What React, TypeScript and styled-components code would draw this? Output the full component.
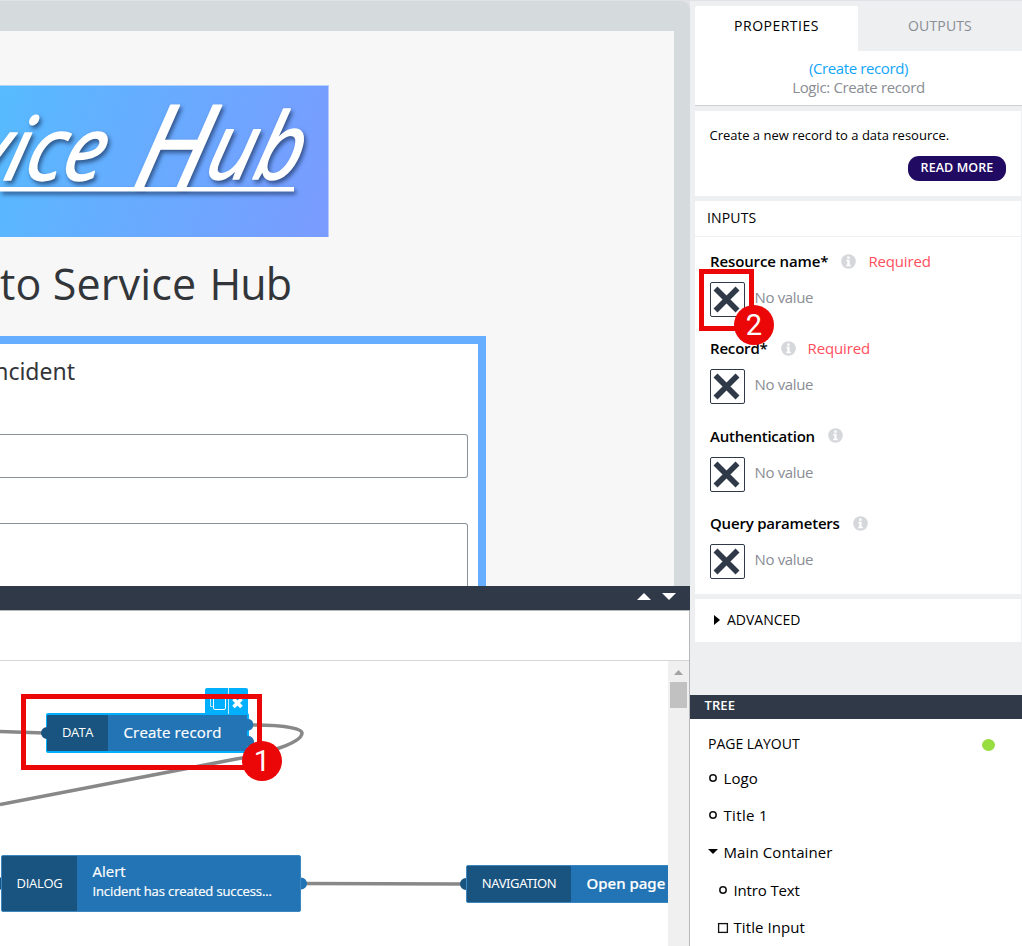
import React from "react";
import styled, { createGlobalStyle } from "styled-components";

const Global = createGlobalStyle`
  * { box-sizing: border-box; }
  body { margin: 0; background: #edeff1; font-family: "Open Sans", "Noto Sans", sans-serif; }
`;

const Screen = styled.div`
  display: grid;
  grid-template-columns: 690px 332px;
  width: 1022px;
  height: 946px;
  overflow: hidden;
  position: relative;
`;

const Txt = styled.span<{ $size: number; $ls?: number; $color?: string; $weight?: number; $font?: string; $lh?: number }>`
  display: block;
  white-space: pre;
  font-size: ${(p) => p.$size}px;
  letter-spacing: ${(p) => p.$ls ?? 0}px;
  color: ${(p) => p.$color ?? "#000"};
  font-weight: ${(p) => p.$weight ?? 400};
  line-height: ${(p) => p.$lh ?? 20}px;
  ${(p) => (p.$font ? `font-family: "${p.$font}", sans-serif;` : "")}
`;

const Workspace = styled.main`
  display: flex;
  flex-direction: column;
  min-width: 0;
  height: 946px;
`;

const Preview = styled.section`
  height: 586px;
  border-top: 1px solid #e1e2e7;
  background: #e1e2e7;
  overflow: hidden;
`;

const DeviceFrame = styled.div`
  height: 100%;
  padding: 30px 16px 0 0;
  background: #d5dadd;
  border-top-right-radius: 9px;
`;

const Page = styled.div`
  height: 555px;
  padding-top: 54px;
  background: #f7f7f7;
  overflow: hidden;
`;

const Banner = styled.div`
  width: 329px;
  height: 152px;
  border-top: 1px solid #b5d2fa;
  border-right: 1px solid #b5cafa;
  background: linear-gradient(108deg, #56bbff 0%, #62b0ff 30%, #7a9bff 100%);
  overflow: hidden;
  svg { display: block; }
`;

const Lettering = styled.g`
  fill: #fff;
  stroke: #fff;
  stroke-linejoin: round;
  filter: drop-shadow(2px 3px 2px rgba(20, 40, 80, 0.65));
  text {
    font-family: "Open Sans", sans-serif;
    font-style: italic;
    stroke-width: 1.6px;
  }
`;

const PageTitle = styled.h1`
  margin: 0;
  height: 99px;
  padding: 17px 0 0 0;
  color: #32363a;
  font-size: 43px;
  font-weight: 400;
  line-height: 60px;
  letter-spacing: 0.15px;
  white-space: nowrap;
`;

const TitleTail = styled.span`
  margin-left: 2px;
  letter-spacing: -0.9px;
`;

const Container = styled.div`
  width: 486px;
  height: 300px;
  padding: 9px 10px 0 0;
  border: solid #66aeff;
  border-width: 8px 8px 0 0;
  background: #fff;
`;

const ContainerTitle = styled.h2`
  display: flex;
  justify-content: flex-end;
  width: 75px;
  margin: 0;
  overflow: hidden;
  color: #32363a;
  font: 400 23px/36px "Noto Sans", sans-serif;
`;

const Field = styled.div<{ $top: number; $height: number }>`
  margin-top: ${(p) => p.$top}px;
  height: ${(p) => p.$height}px;
  border: 1px solid #89919a;
  border-left: 0;
  border-radius: 0 3px 3px 0;
`;

const FlowBar = styled.div`
  display: flex;
  justify-content: flex-end;
  gap: 11px;
  height: 24px;
  padding: 7px 14px 0 0;
  background: #303948;
`;

const Flow = styled.section`
  display: flex;
  flex-direction: column;
  flex: 1;
  border: solid #b5b7ba;
  border-width: 1px 1px 0 0;
  background: #fff;
`;

const FlowTools = styled.div`
  height: 50px;
  border-bottom: 1px solid #d5d6da;
`;

const FlowBody = styled.div`
  display: flex;
  flex: 1;
`;

const Canvas = styled.div`
  position: relative;
  width: 668px;
  height: 285px;
  overflow: hidden;
`;

const Wires = styled.svg`
  position: absolute;
  left: 0;
  top: 0;
`;

const Scroll = styled.div`
  display: flex;
  flex-direction: column;
  align-items: center;
  flex: 1;
  padding-top: 9px;
  background: #f0f0f0;
`;

const Thumb = styled.div`
  width: 17px;
  height: 26px;
  margin-top: 7px;
  background: #c1c1c1;
`;

const Node = styled.div<{ $x: number; $y: number; $w: number; $h: number; $active?: boolean }>`
  position: absolute;
  left: ${(p) => p.$x}px;
  top: ${(p) => p.$y}px;
  width: ${(p) => p.$w}px;
  height: ${(p) => p.$h}px;
  display: flex;
  border: ${(p) => (p.$active ? "2px solid #00b0ff" : "1px solid #3d87c0")};
  border-left-width: 1px;
  border-radius: 2px;
  background: #2374b4;
`;

const Kind = styled.div<{ $w: number }>`
  display: flex;
  align-items: center;
  justify-content: center;
  width: ${(p) => p.$w}px;
  padding-bottom: 2px;
  background: #19537f;
  border-radius: 1px;
`;

const NodeText = styled.div<{ $lift?: number }>`
  display: flex;
  flex-direction: column;
  justify-content: center;
  padding: 0 0 ${(p) => p.$lift ?? 2}px 15.5px;
  -webkit-text-stroke: 0.2px #fff;
`;

const NodeActions = styled.div`
  position: absolute;
  left: 205px;
  top: 27px;
  display: flex;
  width: 43px;
  height: 26px;
  background: #00b0ff;
  border-radius: 2px 2px 0 0;
`;

const Callout = styled.div<{ $x: number; $y: number; $w: number; $h: number }>`
  position: absolute;
  left: ${(p) => p.$x}px;
  top: ${(p) => p.$y}px;
  width: ${(p) => p.$w}px;
  height: ${(p) => p.$h}px;
  border: 5px solid #eb0707;
`;

const CalloutNumber = styled.div<{ $drop: number }>`
  position: absolute;
  right: -25px;
  bottom: ${(p) => -p.$drop}px;
  width: 40px;
  height: 40px;
  border-radius: 50%;
  background: #eb0707;
  color: #fff;
  font: 29px/41px Roboto, sans-serif;
  text-align: center;
`;

const Side = styled.aside`
  display: flex;
  flex-direction: column;
  height: 946px;
  border-top: 1px solid #e1e2e7;
`;

const Tabs = styled.div`
  display: flex;
  padding: 5px 0 0 5px;
`;

const Tab = styled.div<{ $on?: boolean }>`
  display: flex;
  justify-content: center;
  width: ${(p) => (p.$on ? 163 : 164)}px;
  height: 45px;
  padding-top: 10px;
  border-radius: 2px 2px 0 0;
  background: ${(p) => (p.$on ? "#fff" : "transparent")};
`;

const Summary = styled.div`
  display: flex;
  flex-direction: column;
  align-items: center;
  height: 55px;
  margin-left: 5px;
  padding-top: 8px;
  background: #fff;
  border-bottom: 1px solid #cfd0d3;
`;

const Card = styled.section<{ $h: number }>`
  height: ${(p) => p.$h}px;
  margin: 5px 1px 0 5px;
  background: #fff;
`;

const InfoBody = styled.div`
  display: flex;
  flex-direction: column;
  padding: 14px 15px 0 14.5px;
`;

const ReadMore = styled.div`
  display: flex;
  justify-content: center;
  align-self: flex-end;
  width: 98px;
  height: 25px;
  margin-top: 11px;
  padding-top: 2px;
  border-radius: 11px;
  background: #200a62;
`;

const CardHead = styled.div`
  height: 36px;
  padding: 7px 0 0 12px;
  border-bottom: 1px solid #f0f0f2;
`;

const InputBlock = styled.div`
  height: 87.4px;
  padding: 14px 0 0 15px;
`;

const LabelRow = styled.div`
  display: flex;
  align-items: center;
  height: 20px;
`;

const InfoDot = styled.svg`
  display: block;
  margin: 0 12px 0 13px;
`;

const ValueRow = styled.div`
  display: flex;
  margin-top: 11px;
  gap: 9.5px;
`;

const ValueButton = styled.div`
  width: 35px;
  height: 35px;
  border: 1px solid #303948;
  border-radius: 2px;
  svg { display: block; }
`;

const Advanced = styled.div`
  display: flex;
  align-items: center;
  gap: 7px;
  height: 42px;
  padding-left: 19px;
`;

const TreeHead = styled.div`
  height: 24px;
  margin-top: 53px;
  padding-left: 14.5px;
  background: #303948;
`;

const Tree = styled.div`
  flex: 1;
  padding-top: 15px;
  background: #fff;
`;

const TreeTop = styled.div`
  display: flex;
  justify-content: space-between;
  padding: 0 27px 0 18px;
  height: 25px;
`;

const Status = styled.div`
  width: 13px;
  height: 12px;
  margin-top: 5px;
  border-radius: 50%;
  background: #97dd40;
`;

const TreeRow = styled.div<{ $indent?: boolean }>`
  display: flex;
  align-items: center;
  gap: 4.5px;
  height: 37.4px;
  padding-left: ${(p) => (p.$indent ? 27 : 17)}px;
`;

const Mark = ({ kind }: { kind: "dot" | "open" | "box" }) => (
  <svg width="12" height="14" viewBox="0 0 12 14">
    {kind === "dot" && <circle cx="6" cy="7" r="3.2" fill="none" stroke="#111" strokeWidth="1.5" />}
    {kind === "open" && <path d="M1 4h10L6 9z" fill="#000" />}
    {kind === "box" && <rect x="1.600" y="3.600" width="8.800" height="8.800" fill="none" stroke="#111" strokeWidth="1.300" />}
  </svg>
);

const Triangle = ({ down, w, h, color }: { down?: boolean; w: number; h: number; color: string }) => (
  <svg width={w} height={h} viewBox="0 0 10 5" preserveAspectRatio="none">
    <path d={down ? "M0 0h10L5 5z" : "M0 5h10L5 0z"} fill={color} />
  </svg>
);

const inputs = [
  { label: "Resource name*", ls: -0.12, required: true },
  { label: "Record*", ls: -0.18, required: true },
  { label: "Authentication", ls: -0.23, required: false },
  { label: "Query parameters", ls: -0.2, required: false },
];

const tree: { label: string; kind: "dot" | "open" | "box"; indent?: boolean; ls: number }[] = [
  { label: "Logo", kind: "dot", ls: 0.1 },
  { label: "Title 1", kind: "dot", ls: 0.35 },
  { label: "Main Container", kind: "open", ls: 0.1 },
  { label: "Intro Text", kind: "dot", indent: true, ls: -0.15 },
  { label: "Title Input", kind: "box", indent: true, ls: 0.08 },
];

export default function App() {
  return (
    <Screen>
      <Global />
      <Workspace>
        <Preview>
          <DeviceFrame>
            <Page>
              <Banner>
                <svg width="328" height="151" viewBox="0 0 328 151">
                  <Lettering>
                    <g transform="translate(100 94) skewX(-14)">
                      <text textAnchor="end" fontSize="88" textLength="250" lengthAdjust="spacingAndGlyphs">Service</text>
                    </g>
                    <g transform="translate(130 102) skewX(-14)">
                      <text fontSize="116" textLength="166" lengthAdjust="spacingAndGlyphs">
                        H<tspan fontSize="92" dy="-9">ub</tspan>
                      </text>
                    </g>
                    <rect x="0" y="101" width="294" height="4.500" stroke="none" />
                  </Lettering>
                </svg>
              </Banner>
              <PageTitle>to Service <TitleTail>Hub</TitleTail></PageTitle>
              <Container>
                <ContainerTitle>Incident</ContainerTitle>
                <Field $top={45} $height={44} />
                <Field $top={45} $height={120} />
              </Container>
            </Page>
          </DeviceFrame>
        </Preview>
        <FlowBar>
          <Triangle w={14} h={7} color="#fff" />
          <Triangle down w={14} h={7} color="#fff" />
        </FlowBar>
        <Flow>
          <FlowTools />
          <FlowBody>
            <Canvas>
              <Wires width="668" height="285">
                <g fill="none" stroke="#888" strokeWidth="3.6">
                  <path d="M0 70.500L44 72" />
                  <path d="M250 64C285 64 302 67 302 72C302 84 250 96 236 98L0 143.500" />
                  <path d="M302 222.500L464 223" />
                </g>
              </Wires>
              <Node $x={46} $y={52} $w={203} $h={40} $active>
                <Kind $w={61}><Txt $size={13} $color="#fff" $ls={-0.5}>DATA</Txt></Kind>
                <NodeText $lift={3}><Txt $size={15} $color="#fff" $weight={500} $ls={0.15}>Create record</Txt></NodeText>
              </Node>
              <Node $x={1} $y={194} $w={300} $h={57}>
                <Kind $w={75}><Txt $size={13} $color="#fff" $ls={-0.3}>DIALOG</Txt></Kind>
                <NodeText $lift={6}>
                  <Txt $size={15} $color="#fff" $weight={500}>Alert</Txt>
                  <Txt $size={13} $color="#fff" $weight={500} $ls={-0.12}>Incident has created success...</Txt>
                </NodeText>
              </Node>
              <Node $x={466} $y={204} $w={260} $h={38}>
                <Kind $w={104}><Txt $size={13} $color="#fff" $ls={-0.4} $font="Noto Sans">NAVIGATION</Txt></Kind>
                <NodeText><Txt $size={15} $color="#fff" $weight={500} $font="Noto Sans">Open page</Txt></NodeText>
              </Node>
              <NodeActions>
                <svg width="43" height="26" fill="none" stroke="#fff">
                  <rect x="8.500" y="6.500" width="12" height="15" rx="1.500" />
                  <path d="M5.500 8v10.500h2M23.500 0v26" strokeOpacity=".75" />
                  <path d="M28.500 11l8 8M36.500 11l-8 8" strokeWidth="3.600" />
                </svg>
              </NodeActions>
              <Wires width="668" height="285">
                <path d="M47 66a6 6 0 0 0 0 12zM1 216.500a6 6 0 0 0 0 12zM466 217a6 6 0 0 0 0 12z" fill="#19537f" />
                <path d="M246 58h3a6 6 0 0 1 0 11.500h-3zM246 75h2.500a6 6 0 0 1 4 10h-6.500zM301 216.500a6 6 0 0 1 0 12z" fill="#2374b4" />
              </Wires>
            </Canvas>
            <Scroll>
              <Triangle w={9} h={5} color="#a3a3a3" />
              <Thumb />
            </Scroll>
          </FlowBody>
        </Flow>
      </Workspace>
      <Side>
        <Tabs>
          <Tab $on><Txt $size={14} $ls={0.5}>PROPERTIES</Txt></Tab>
          <Tab><Txt $size={14} $color="#8a8d94" $ls={0.15}>OUTPUTS</Txt></Tab>
        </Tabs>
        <Summary>
          <Txt $size={15} $color="#12a5f8" $lh={19} $ls={-0.38}>(Create record)</Txt>
          <Txt $size={15} $color="#8a8d94" $lh={19} $ls={-0.36}>Logic: Create record</Txt>
        </Summary>
        <Card $h={85}>
          <InfoBody>
            <Txt $size={13}>Create a new record to a data resource.</Txt>
            <ReadMore><Txt $size={12.500} $weight={600} $color="#fff" $ls={0.1}>READ MORE</Txt></ReadMore>
          </InfoBody>
        </Card>
        <Card $h={393}>
          <CardHead><Txt $size={14} $ls={0.15}>INPUTS</Txt></CardHead>
          {inputs.map((i) => (
            <InputBlock key={i.label}>
              <LabelRow>
                <Txt $size={15} $weight={600} $ls={i.ls}>{i.label}</Txt>
                <InfoDot width="15" height="15" viewBox="0 0 15 15">
                  <circle cx="7.500" cy="7.500" r="7.300" fill="#d5d7db" />
                  <path d="M6.200 2.500h2.400v2.200h-2.400zM5.300 5.800h3.300v4.900h1.200v1.500h-4.500v-1.500h1v-3.400h-1z" fill="#fff" />
                </InfoDot>
                {i.required && <Txt $size={15} $color="#ff4f5e" $ls={-0.15}>Required</Txt>}
              </LabelRow>
              <ValueRow>
                <ValueButton>
                  <svg width="33" height="33"><path d="M4.500 5.500L26.500 27.500M26.500 5.500L4.500 27.500" stroke="#303948" strokeWidth="5.600" /></svg>
                </ValueButton>
                <Txt $size={15} $color="#8a8d94" $lh={31} $ls={-0.35}>No value</Txt>
              </ValueRow>
            </InputBlock>
          ))}
        </Card>
        <Card $h={43}>
          <Advanced>
            <svg width="6" height="10"><path d="M0 0v10l6-5z" fill="#000" /></svg>
            <Txt $size={14}>ADVANCED</Txt>
          </Advanced>
        </Card>
        <TreeHead><Txt $size={13} $weight={600} $color="#fff" $lh={21} $ls={0.1}>TREE</Txt></TreeHead>
        <Tree>
          <TreeTop><Txt $size={14}>PAGE LAYOUT</Txt><Status /></TreeTop>
          {tree.map((t) => (
            <TreeRow key={t.label} $indent={t.indent}>
              <Mark kind={t.kind} />
              <Txt $size={15} $ls={t.ls}>{t.label}</Txt>
            </TreeRow>
          ))}
        </Tree>
      </Side>
      <Callout $x={21} $y={694} $w={241} $h={76}><CalloutNumber $drop={16}>1</CalloutNumber></Callout>
      <Callout $x={699} $y={269} $w={55} $h={62}><CalloutNumber $drop={19}>2</CalloutNumber></Callout>
    </Screen>
  );
}
